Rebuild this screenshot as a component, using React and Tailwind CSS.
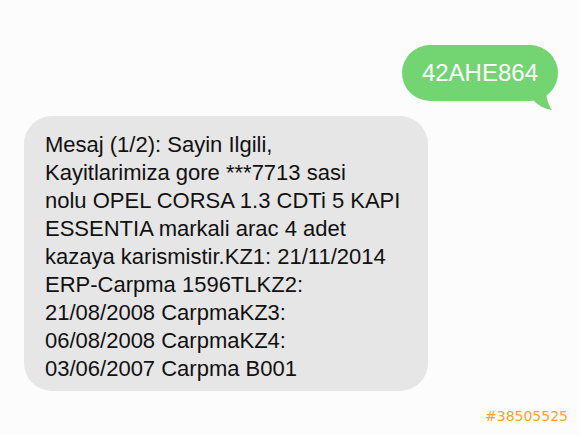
export default function App() {
  return (
    <div
      className="w-[580px] h-[435px] bg-[#fcfcfc] flex flex-col relative overflow-hidden"
      style={{ fontFamily: '"Liberation Sans", Arial, sans-serif' }}
    >
      {/* outgoing bubble */}
      <div className="flex justify-end pt-[45px] pr-[22px]">
        <div className="relative">
          <div className="bg-[#72d572] text-white text-[24px] leading-none rounded-[28px] h-[56px] px-[20px] flex items-center">
            42AHE864
          </div>
          <svg
            className="absolute right-[4px] bottom-[-10px]"
            width="24"
            height="22"
            viewBox="0 0 24 22"
          >
            <path d="M2 0 L16 0 C16 8 18 16 22 21 C14 20 8 16 4 12 Z" fill="#72d572" />
          </svg>
        </div>
      </div>

      {/* incoming bubble */}
      <div className="pl-[24px] pt-[15px]">
        <div className="w-[404px] h-[275px] bg-[#e6e6e6] rounded-[28px] pl-[21px] pt-[15px] text-[#111] text-[22px] leading-[28px] whitespace-nowrap">
          <p>Mesaj (1/2): Sayin Ilgili,</p>
          <p>Kayitlarimiza gore ***7713 sasi</p>
          <p>nolu OPEL CORSA 1.3 CDTi 5 KAPI</p>
          <p>ESSENTIA markali arac 4 adet</p>
          <p>kazaya karismistir.KZ1: 21/11/2014</p>
          <p>ERP-Carpma 1596TLKZ2:</p>
          <p>21/08/2008 CarpmaKZ3:</p>
          <p>06/08/2008 CarpmaKZ4:</p>
          <p>03/06/2007 Carpma B001</p>
        </div>
      </div>

      <div
        className="absolute right-[12px] bottom-[8px] text-[#f5a623] text-[14px]"
        style={{ fontFamily: '"DejaVu Sans", Verdana, sans-serif' }}
      >
        #38505525
      </div>
    </div>
  );
}
